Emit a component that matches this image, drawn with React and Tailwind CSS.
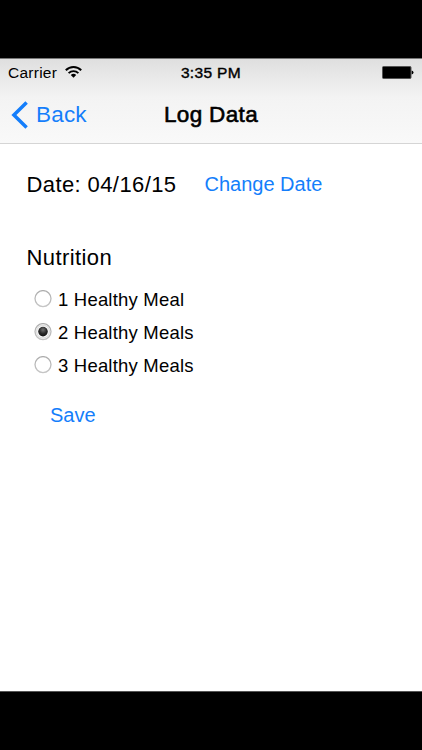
const meals = ["1 Healthy Meal", "2 Healthy Meals", "3 Healthy Meals"];

function Radio({ checked }) {
  return (
    <svg className="block h-[18px] w-[18px] shrink-0" viewBox="0 0 18 18">
      <defs>
        <radialGradient id="dot" cx="50%" cy="32%" r="65%">
          <stop offset="0" stopColor="#707070" />
          <stop offset="0.6" stopColor="#2a2a2a" />
          <stop offset="1" stopColor="#151515" />
        </radialGradient>
        <linearGradient id="ring" x1="0" y1="0" x2="0" y2="1">
          <stop offset="0" stopColor="#adadad" />
          <stop offset="1" stopColor="#c6c6c6" />
        </linearGradient>
      </defs>
      <circle cx="9" cy="8.6" r="8" fill="#fff" stroke="url(#ring)" strokeWidth="1.3" />
      {checked && <circle cx="9" cy="8.6" r="6.4" fill="none" stroke="#e0e0e0" strokeWidth="1.4" />}
      {checked && <circle cx="9" cy="8.6" r="4.8" fill="url(#dot)" />}
    </svg>
  );
}

export default function App() {
  return (
    <div className="flex h-[750px] w-[422px] flex-col overflow-hidden bg-black font-['Liberation_Sans',Arial,sans-serif] whitespace-nowrap text-black">
      <div className="h-[58px] shrink-0" />
      <header className="h-[86px] shrink-0 border-t border-b border-t-[#777] border-b-[#d5d5d5] bg-linear-to-b from-[#dfdfdf] via-[#f3f3f3] via-45% to-[#f9f9f9]">
        <div className="grid h-[28px] grid-cols-3 items-center pr-[8px] pl-[8px] text-[15.5px] leading-[28px]">
          <div className="flex items-center gap-[8px]">
            <span className="tracking-[0.25px]">Carrier</span>
            <svg className="-mt-[2px] h-[12px] w-[17px]" viewBox="0 0 17 12">
              <path d="M0.8 4.3 A10.8 10.8 0 0 1 16.2 4.3" fill="none" stroke="#000" strokeWidth="2" />
              <path d="M3.6 7.1 A6.9 6.9 0 0 1 13.4 7.1" fill="none" stroke="#000" strokeWidth="1.8" />
              <path d="M5.8 9.1 A3.9 3.9 0 0 1 11.2 9.1 L8.5 11.8 Z" />
            </svg>
          </div>
          <span className="text-center tracking-[0.35px] [-webkit-text-stroke:0.4px_#000]">3:35 PM</span>
          <svg className="mb-[2px] h-[13px] w-[33px] justify-self-end" viewBox="0 0 33 13">
            <rect x="1.5" y="0.5" width="28.5" height="12" rx="1" fill="#000" stroke="#555" strokeWidth="1" />
            <path d="M30.7 4.5 Q32.5 5 32.5 6.5 Q32.5 8 30.7 8.5Z" />
          </svg>
        </div>
        <div className="grid h-[56px] grid-cols-3 items-center pr-[8px] pl-[11px] text-[22.5px] leading-[56px]">
          <div className="flex items-center gap-[8px] text-[#147efb]">
            <svg className="h-[28px] w-[17px]" viewBox="0 0 17 28">
              <path d="M15.6 1.5 L2.9 14 L15.6 26.5" fill="none" stroke="#147efb" strokeWidth="3.5" />
            </svg>
            <span className="tracking-[0.2px]">Back</span>
          </div>
          <span className="-ml-[3px] text-center tracking-[0.35px] [-webkit-text-stroke:0.6px_#000]">Log Data</span>
        </div>
      </header>
      <main className="h-[548px] shrink-0 border-b border-[#555] bg-white pt-[25px] pl-[26.5px]">
        <div className="flex h-[30px] items-center">
          <span className="w-[178px] text-[22px] tracking-[0.4px]">Date: 04/16/15</span>
          <button className="text-[20px] tracking-[0px] text-[#147efb]">Change Date</button>
        </div>
        <h2 className="mt-[44px] h-[30px] text-[22px] leading-[30px] tracking-[0.4px]">Nutrition</h2>
        <div className="mt-[9px] flex flex-col pl-[7.5px]">
          {meals.map((label, i) => (
            <label key={label} className="flex h-[33px] items-center gap-[6px] text-[18.5px] tracking-[0.2px]">
              <Radio checked={i === 1} />
              <span className="pt-[2px]">{label}</span>
            </label>
          ))}
        </div>
        <button className="mt-[20px] ml-[23.5px] block h-[28px] text-[20px] leading-[28px] tracking-[0px] text-[#147efb]">Save</button>
      </main>
    </div>
  );
}
